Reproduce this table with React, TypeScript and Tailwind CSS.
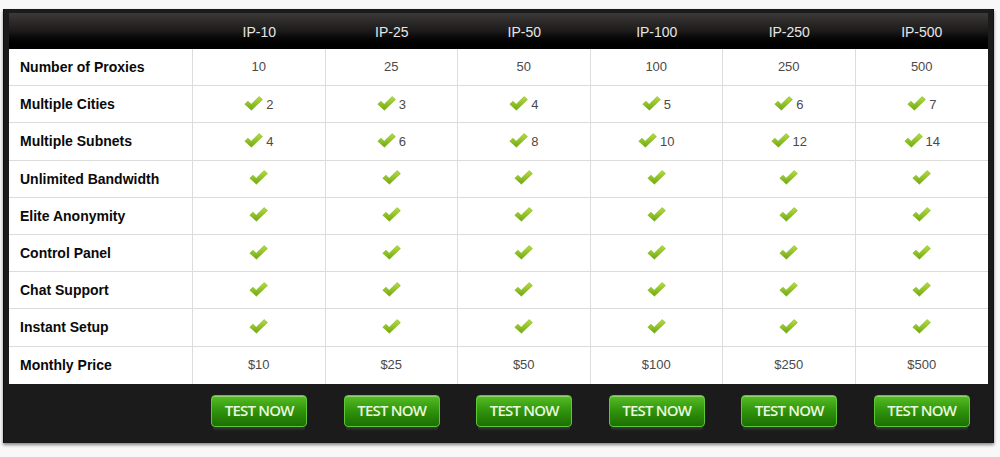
const plans = ["IP-10", "IP-25", "IP-50", "IP-100", "IP-250", "IP-500"];

type Cell = { check?: boolean; text?: string };

const rows: { label: string; cells: Cell[] }[] = [
  { label: "Number of Proxies", cells: ["10", "25", "50", "100", "250", "500"].map((t) => ({ text: t })) },
  { label: "Multiple Cities", cells: ["2", "3", "4", "5", "6", "7"].map((t) => ({ check: true, text: t })) },
  { label: "Multiple Subnets", cells: ["4", "6", "8", "10", "12", "14"].map((t) => ({ check: true, text: t })) },
  { label: "Unlimited Bandwidth", cells: plans.map(() => ({ check: true })) },
  { label: "Elite Anonymity", cells: plans.map(() => ({ check: true })) },
  { label: "Control Panel", cells: plans.map(() => ({ check: true })) },
  { label: "Chat Support", cells: plans.map(() => ({ check: true })) },
  { label: "Instant Setup", cells: plans.map(() => ({ check: true })) },
  { label: "Monthly Price", cells: ["$10", "$25", "$50", "$100", "$250", "$500"].map((t) => ({ text: t })) },
];

function Check() {
  return (
    <svg width="19" height="15" viewBox="0 0 19 15" className="shrink-0 -mt-[2px]">
      <defs>
        <linearGradient id="chk" x1="0" y1="0" x2="0" y2="1">
          <stop offset="0" stopColor="#b8de3c" />
          <stop offset="1" stopColor="#6fa814" />
        </linearGradient>
      </defs>
      <path
        d="M0.8 8.2 L3.9 5.2 L7.2 8.3 L15.2 0.6 L18.4 3.6 L7.4 14.2 Z"
        fill="url(#chk)"
        stroke="#7fb51e"
        strokeWidth="0.6"
        strokeLinejoin="round"
      />
    </svg>
  );
}

function TestButton() {
  return (
    <div className="flex flex-col items-center">
      <button className="w-[96px] h-[32px] rounded-[4px] border border-[#5cc836] bg-gradient-to-b from-[#56bd22] via-[#2f930c] to-[#1d6f04] text-[#e8f8dc] text-[15px] font-semibold tracking-[-0.8px] shadow-[inset_0_1px_0_rgba(255,255,255,0.35)] [font-family:'Open_Sans',sans-serif]">
        TEST NOW
      </button>
      <div className="w-[92px] h-[4px] bg-gradient-to-b from-[#3a3a3a] to-transparent rounded-b-[4px]" />
    </div>
  );
}

export default function App() {
  return (
    <div className="w-[1000px] h-[457px] bg-[#f8f8f8] pt-[9px] pl-[3px] [font-family:'Liberation_Sans',Arial,sans-serif]">
      <div className="w-[991px] h-[434px] bg-[#1b1b1b] px-[5px] pt-[4px] shadow-[0_2px_3px_rgba(0,0,0,0.45)] border-l border-r border-[#0f0f0f]">
        <div className="grid grid-cols-[184px_repeat(6,1fr)] h-[36px] bg-gradient-to-b from-[#3d3939] via-[#1c1a1a] to-[#000000]">
          <div />
          {plans.map((p) => (
            <div key={p} className="flex items-center justify-center text-[14px] text-[#e6e6e6] pt-[2px]">
              {p}
            </div>
          ))}
        </div>
        <div className="bg-white">
          {rows.map((r, i) => (
            <div
              key={r.label}
              className={`grid grid-cols-[184px_repeat(6,1fr)] h-[37.2px] ${i < rows.length - 1 ? "border-b border-[#dcdcdc]" : ""}`}
            >
              <div className="flex items-center pl-[11px] pt-[1px] text-[14px] font-bold text-[#0a0a0a] border-r border-[#dcdcdc]">
                {r.label}
              </div>
              {r.cells.map((c, j) => (
                <div
                  key={j}
                  className={`flex items-center justify-center gap-[3px] text-[13px] text-[#4a4a4a] ${j < 5 ? "border-r border-[#dcdcdc]" : ""}`}
                >
                  {c.check && <Check />}
                  {c.text && <span className={c.check ? "pt-[1px]" : ""}>{c.text}</span>}
                </div>
              ))}
            </div>
          ))}
        </div>
        <div className="grid grid-cols-[184px_repeat(6,1fr)] pt-[11px]">
          <div />
          {plans.map((p) => (
            <TestButton key={p} />
          ))}
        </div>
      </div>
    </div>
  );
}
